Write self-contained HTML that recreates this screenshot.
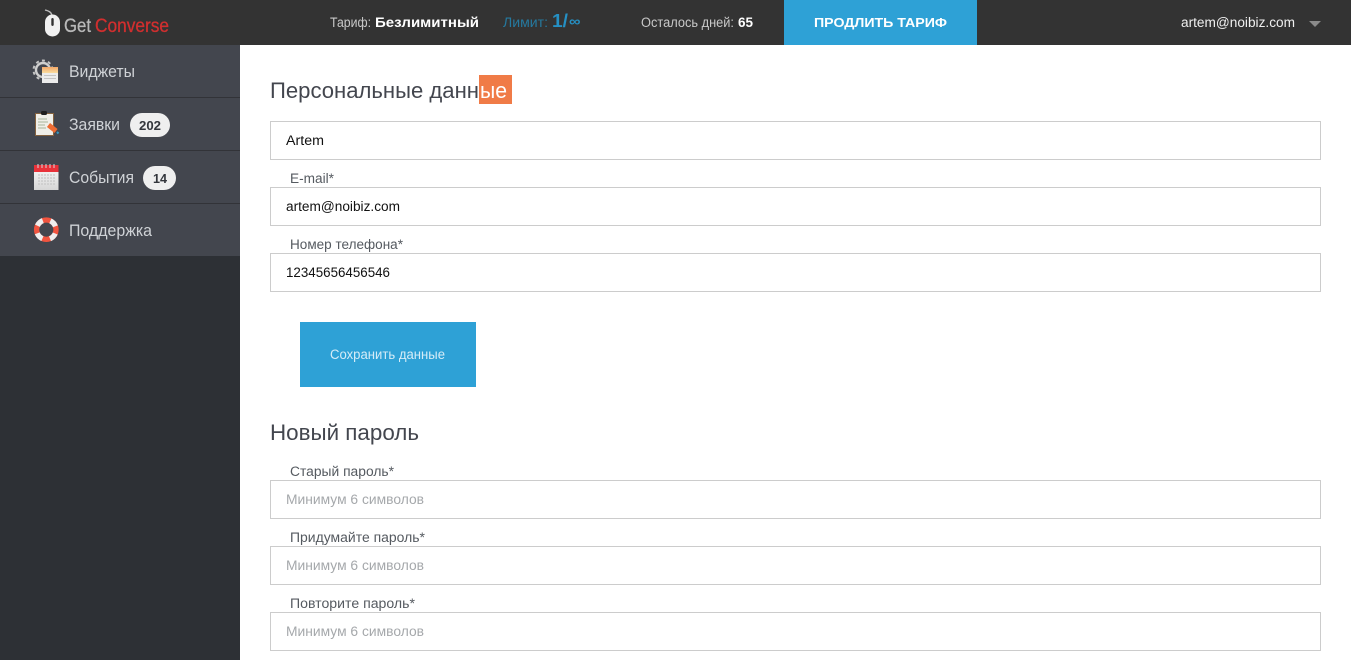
<!DOCTYPE html>
<html lang="ru">
<head>
<meta charset="utf-8">
<title>GetConverse</title>
<style>
html,body{margin:0;padding:0;width:1351px;height:660px;overflow:hidden;background:#fff}
svg{display:block}
text{font-family:"Liberation Sans","DejaVu Sans",sans-serif}
</style>
</head>
<body>
<svg width="1351" height="660" viewBox="0 0 1351 660" xmlns="http://www.w3.org/2000/svg">
<defs>
<linearGradient id="cal" x1="0" y1="0" x2="0" y2="1"><stop offset="0" stop-color="#fafafa"/><stop offset="1" stop-color="#d6d6d6"/></linearGradient>
<linearGradient id="note" x1="0" y1="0" x2="0" y2="1"><stop offset="0" stop-color="#f4a868"/><stop offset="1" stop-color="#f8dca0"/></linearGradient>
</defs>
<rect width="1351" height="660" fill="#fff"/>
<!-- header -->
<rect width="1351" height="45" fill="#333333"/>
<rect x="784" width="193" height="45" fill="#2ea1d6"/>
<!-- sidebar -->
<rect y="45" width="240" height="615" fill="#2d3035"/>
<rect y="45" width="240" height="211" fill="#43464e"/>
<rect y="97" width="240" height="1" fill="#323338"/>
<rect y="150" width="240" height="1" fill="#323338"/>
<rect y="203" width="240" height="1" fill="#323338"/>

<!-- logo mouse -->
<path d="M45 10 C49 11 51 12 52 15" fill="none" stroke="#bdbdbd" stroke-width="1.4"/>
<rect x="45" y="14.500" width="15" height="22" rx="7.500" fill="#f1f1f1"/>
<rect x="51.300" y="18" width="2.400" height="8" rx="1.200" fill="#333"/>
<text x="64" y="32" font-size="19.500" fill="#b9b9b9" stroke="#b9b9b9" stroke-width="0.300" textLength="27" lengthAdjust="spacingAndGlyphs">Get</text>
<text x="95" y="32" font-size="19.500" fill="#d12f2f" stroke="#d12f2f" stroke-width="0.300" textLength="74" lengthAdjust="spacingAndGlyphs">Converse</text>

<!-- header text -->
<text x="330" y="27" font-size="13.500" fill="#c9c9c9" textLength="41" lengthAdjust="spacingAndGlyphs">Тариф:</text>
<text x="375" y="27" font-size="14" font-weight="700" fill="#fff" textLength="104" lengthAdjust="spacingAndGlyphs">Безлимитный</text>
<text x="503" y="27" font-size="13.500" fill="#25799f" textLength="45" lengthAdjust="spacingAndGlyphs">Лимит:</text>
<text x="552" y="27" font-size="18" font-weight="700" fill="#2590c4" textLength="16" lengthAdjust="spacingAndGlyphs">1/</text>
<text x="569" y="26" font-size="14" font-weight="700" fill="#2590c4" textLength="11.500" lengthAdjust="spacingAndGlyphs">∞</text>
<text x="641" y="27" font-size="13.500" fill="#c9c9c9" textLength="93" lengthAdjust="spacingAndGlyphs">Осталось дней:</text>
<text x="738" y="27" font-size="14" font-weight="700" fill="#fff" textLength="15" lengthAdjust="spacingAndGlyphs">65</text>
<text x="814" y="27" font-size="13" font-weight="700" fill="#fff" textLength="133" lengthAdjust="spacingAndGlyphs">ПРОДЛИТЬ ТАРИФ</text>
<text x="1181" y="27" font-size="13.500" fill="#f0f0f0" textLength="114" lengthAdjust="spacingAndGlyphs">artem@noibiz.com</text>
<path d="M1309 21 H1321 L1315 27 Z" fill="#8a8a8a"/>

<!-- icon: widgets -->
<circle cx="43" cy="70" r="7" fill="none" stroke="#cfcfcf" stroke-width="2.400"/>
<circle cx="43" cy="70" r="9.500" fill="none" stroke="#c4c4c4" stroke-width="2" stroke-dasharray="3 3.200"/>
<rect x="42" y="67" width="16" height="16" fill="#ececec"/>
<rect x="42" y="67" width="16" height="6" fill="url(#note)"/>
<rect x="44" y="75" width="12" height="1" fill="#c4c4c4"/>
<rect x="44" y="78" width="12" height="1" fill="#c4c4c4"/>

<!-- icon: requests -->
<rect x="35" y="113" width="19" height="23" fill="#84623f"/>
<rect x="36" y="114" width="17" height="21" fill="#f0efe9"/>
<rect x="41" y="111" width="6" height="4" rx="1.500" fill="#1f1f1f"/>
<path d="M38 119H47M38 122H48M38 125H45M38 128H46" stroke="#a9b59a" stroke-width="1"/>
<path d="M48.500 125 L56 131" stroke="#ee6c33" stroke-width="5"/>
<path d="M57 132 L58.500 133.500" stroke="#2f9ac7" stroke-width="2"/>

<!-- icon: events -->
<rect x="34" y="165" width="24.500" height="25" fill="url(#cal)"/>
<rect x="34" y="165" width="24.500" height="7" fill="#e8323a"/>
<path d="M38 164V168M42 164V168M46 164V168M50 164V168M54 164V168" stroke="#d8d8d8" stroke-width="1"/>
<path d="M38 175H55M38 178H55M38 181H55M38 184H55" stroke="#c6c6c6" stroke-width="1.200" stroke-dasharray="2 1"/>

<!-- icon: support -->
<circle cx="46.300" cy="229.700" r="9.700" fill="none" stroke="#f1543f" stroke-width="5.300"/>
<circle cx="46.300" cy="229.700" r="9.700" fill="none" stroke="#eeeeee" stroke-width="5.300" stroke-dasharray="7.500 7.740" stroke-dashoffset="11.370"/>

<!-- sidebar text -->
<text x="69" y="77" font-size="16.800" fill="#cfd2d6" textLength="66" lengthAdjust="spacingAndGlyphs">Виджеты</text>
<text x="69" y="130" font-size="16.800" fill="#cfd2d6" textLength="51" lengthAdjust="spacingAndGlyphs">Заявки</text>
<rect x="130" y="113" width="40" height="24" rx="12" fill="#efefef"/>
<text x="139" y="130" font-size="13" font-weight="700" fill="#33363c" textLength="22" lengthAdjust="spacingAndGlyphs">202</text>
<text x="69" y="183" font-size="16.800" fill="#cfd2d6" textLength="65" lengthAdjust="spacingAndGlyphs">События</text>
<rect x="143" y="166" width="33" height="24" rx="12" fill="#efefef"/>
<text x="153" y="183" font-size="13" font-weight="700" fill="#33363c" textLength="14" lengthAdjust="spacingAndGlyphs">14</text>
<text x="69" y="236" font-size="16.800" fill="#cfd2d6" textLength="83" lengthAdjust="spacingAndGlyphs">Поддержка</text>

<!-- heading 1 -->
<rect x="479" y="75" width="33" height="29" fill="#f07b47"/>
<text x="270" y="98" font-size="22.500" fill="#43464e" textLength="209" lengthAdjust="spacingAndGlyphs">Персональные данн</text>
<text x="480" y="98" font-size="22.500" fill="#fff" textLength="27" lengthAdjust="spacingAndGlyphs">ые</text>

<!-- inputs -->
<g fill="#fff" stroke="#cccccc" stroke-width="1">
<rect x="270.500" y="121.500" width="1050" height="38"/>
<rect x="270.500" y="187.500" width="1050" height="38"/>
<rect x="270.500" y="253.500" width="1050" height="38"/>
<rect x="270.500" y="480.500" width="1050" height="38"/>
<rect x="270.500" y="546.500" width="1050" height="38"/>
<rect x="270.500" y="612.500" width="1050" height="38"/>
</g>

<text x="286" y="145" font-size="13.500" fill="#111" textLength="38" lengthAdjust="spacingAndGlyphs">Artem</text>
<text x="290" y="183" font-size="13.500" fill="#555a60" textLength="44" lengthAdjust="spacingAndGlyphs">E-mail*</text>
<text x="286" y="211" font-size="13.500" fill="#111" textLength="114" lengthAdjust="spacingAndGlyphs">artem@noibiz.com</text>
<text x="290" y="249" font-size="13.500" fill="#555a60" textLength="113" lengthAdjust="spacingAndGlyphs">Номер телефона*</text>
<text x="286" y="277" font-size="13.500" fill="#111" textLength="104" lengthAdjust="spacingAndGlyphs">12345656456546</text>

<!-- save button -->
<rect x="300" y="322" width="176" height="65" fill="#2ea1d6"/>
<text x="330" y="359" font-size="13.500" fill="#d5ecf7" textLength="115" lengthAdjust="spacingAndGlyphs">Сохранить данные</text>

<!-- heading 2 -->
<text x="270" y="440" font-size="22.500" fill="#43464e" textLength="149" lengthAdjust="spacingAndGlyphs">Новый пароль</text>

<text x="290" y="476" font-size="13.500" fill="#555a60" textLength="104" lengthAdjust="spacingAndGlyphs">Старый пароль*</text>
<text x="286" y="504" font-size="13.500" fill="#a5a8ab" textLength="138" lengthAdjust="spacingAndGlyphs">Минимум 6 символов</text>
<text x="290" y="542" font-size="13.500" fill="#555a60" textLength="135" lengthAdjust="spacingAndGlyphs">Придумайте пароль*</text>
<text x="286" y="570" font-size="13.500" fill="#a5a8ab" textLength="138" lengthAdjust="spacingAndGlyphs">Минимум 6 символов</text>
<text x="290" y="608" font-size="13.500" fill="#555a60" textLength="125" lengthAdjust="spacingAndGlyphs">Повторите пароль*</text>
<text x="286" y="636" font-size="13.500" fill="#a5a8ab" textLength="138" lengthAdjust="spacingAndGlyphs">Минимум 6 символов</text>
</svg>
</body>
</html>
